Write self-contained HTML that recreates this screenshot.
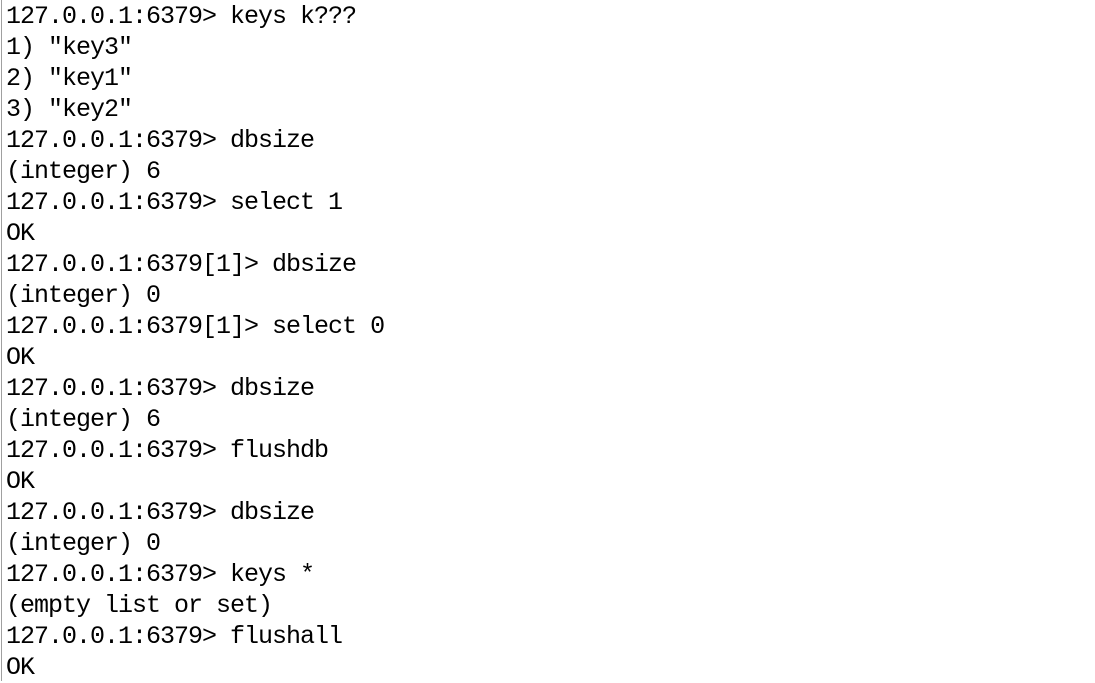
<!DOCTYPE html>
<html><head><style>
html,body{margin:0;padding:0;background:#fff;width:1095px;height:681px;overflow:hidden}
.b{position:absolute;left:1px;top:0;width:1px;height:681px;background:#a0a0a0}
pre{margin:0;position:absolute;left:6px;top:1px;font-family:"Liberation Mono",monospace;font-size:25px;letter-spacing:-1.0px;line-height:31px;color:#000}
</style></head><body><div class="b"></div><pre>127.0.0.1:6379&gt; keys k???
1) "key3"
2) "key1"
3) "key2"
127.0.0.1:6379&gt; dbsize
(integer) 6
127.0.0.1:6379&gt; select 1
OK
127.0.0.1:6379[1]&gt; dbsize
(integer) 0
127.0.0.1:6379[1]&gt; select 0
OK
127.0.0.1:6379&gt; dbsize
(integer) 6
127.0.0.1:6379&gt; flushdb
OK
127.0.0.1:6379&gt; dbsize
(integer) 0
127.0.0.1:6379&gt; keys *
(empty list or set)
127.0.0.1:6379&gt; flushall
OK</pre></body></html>
